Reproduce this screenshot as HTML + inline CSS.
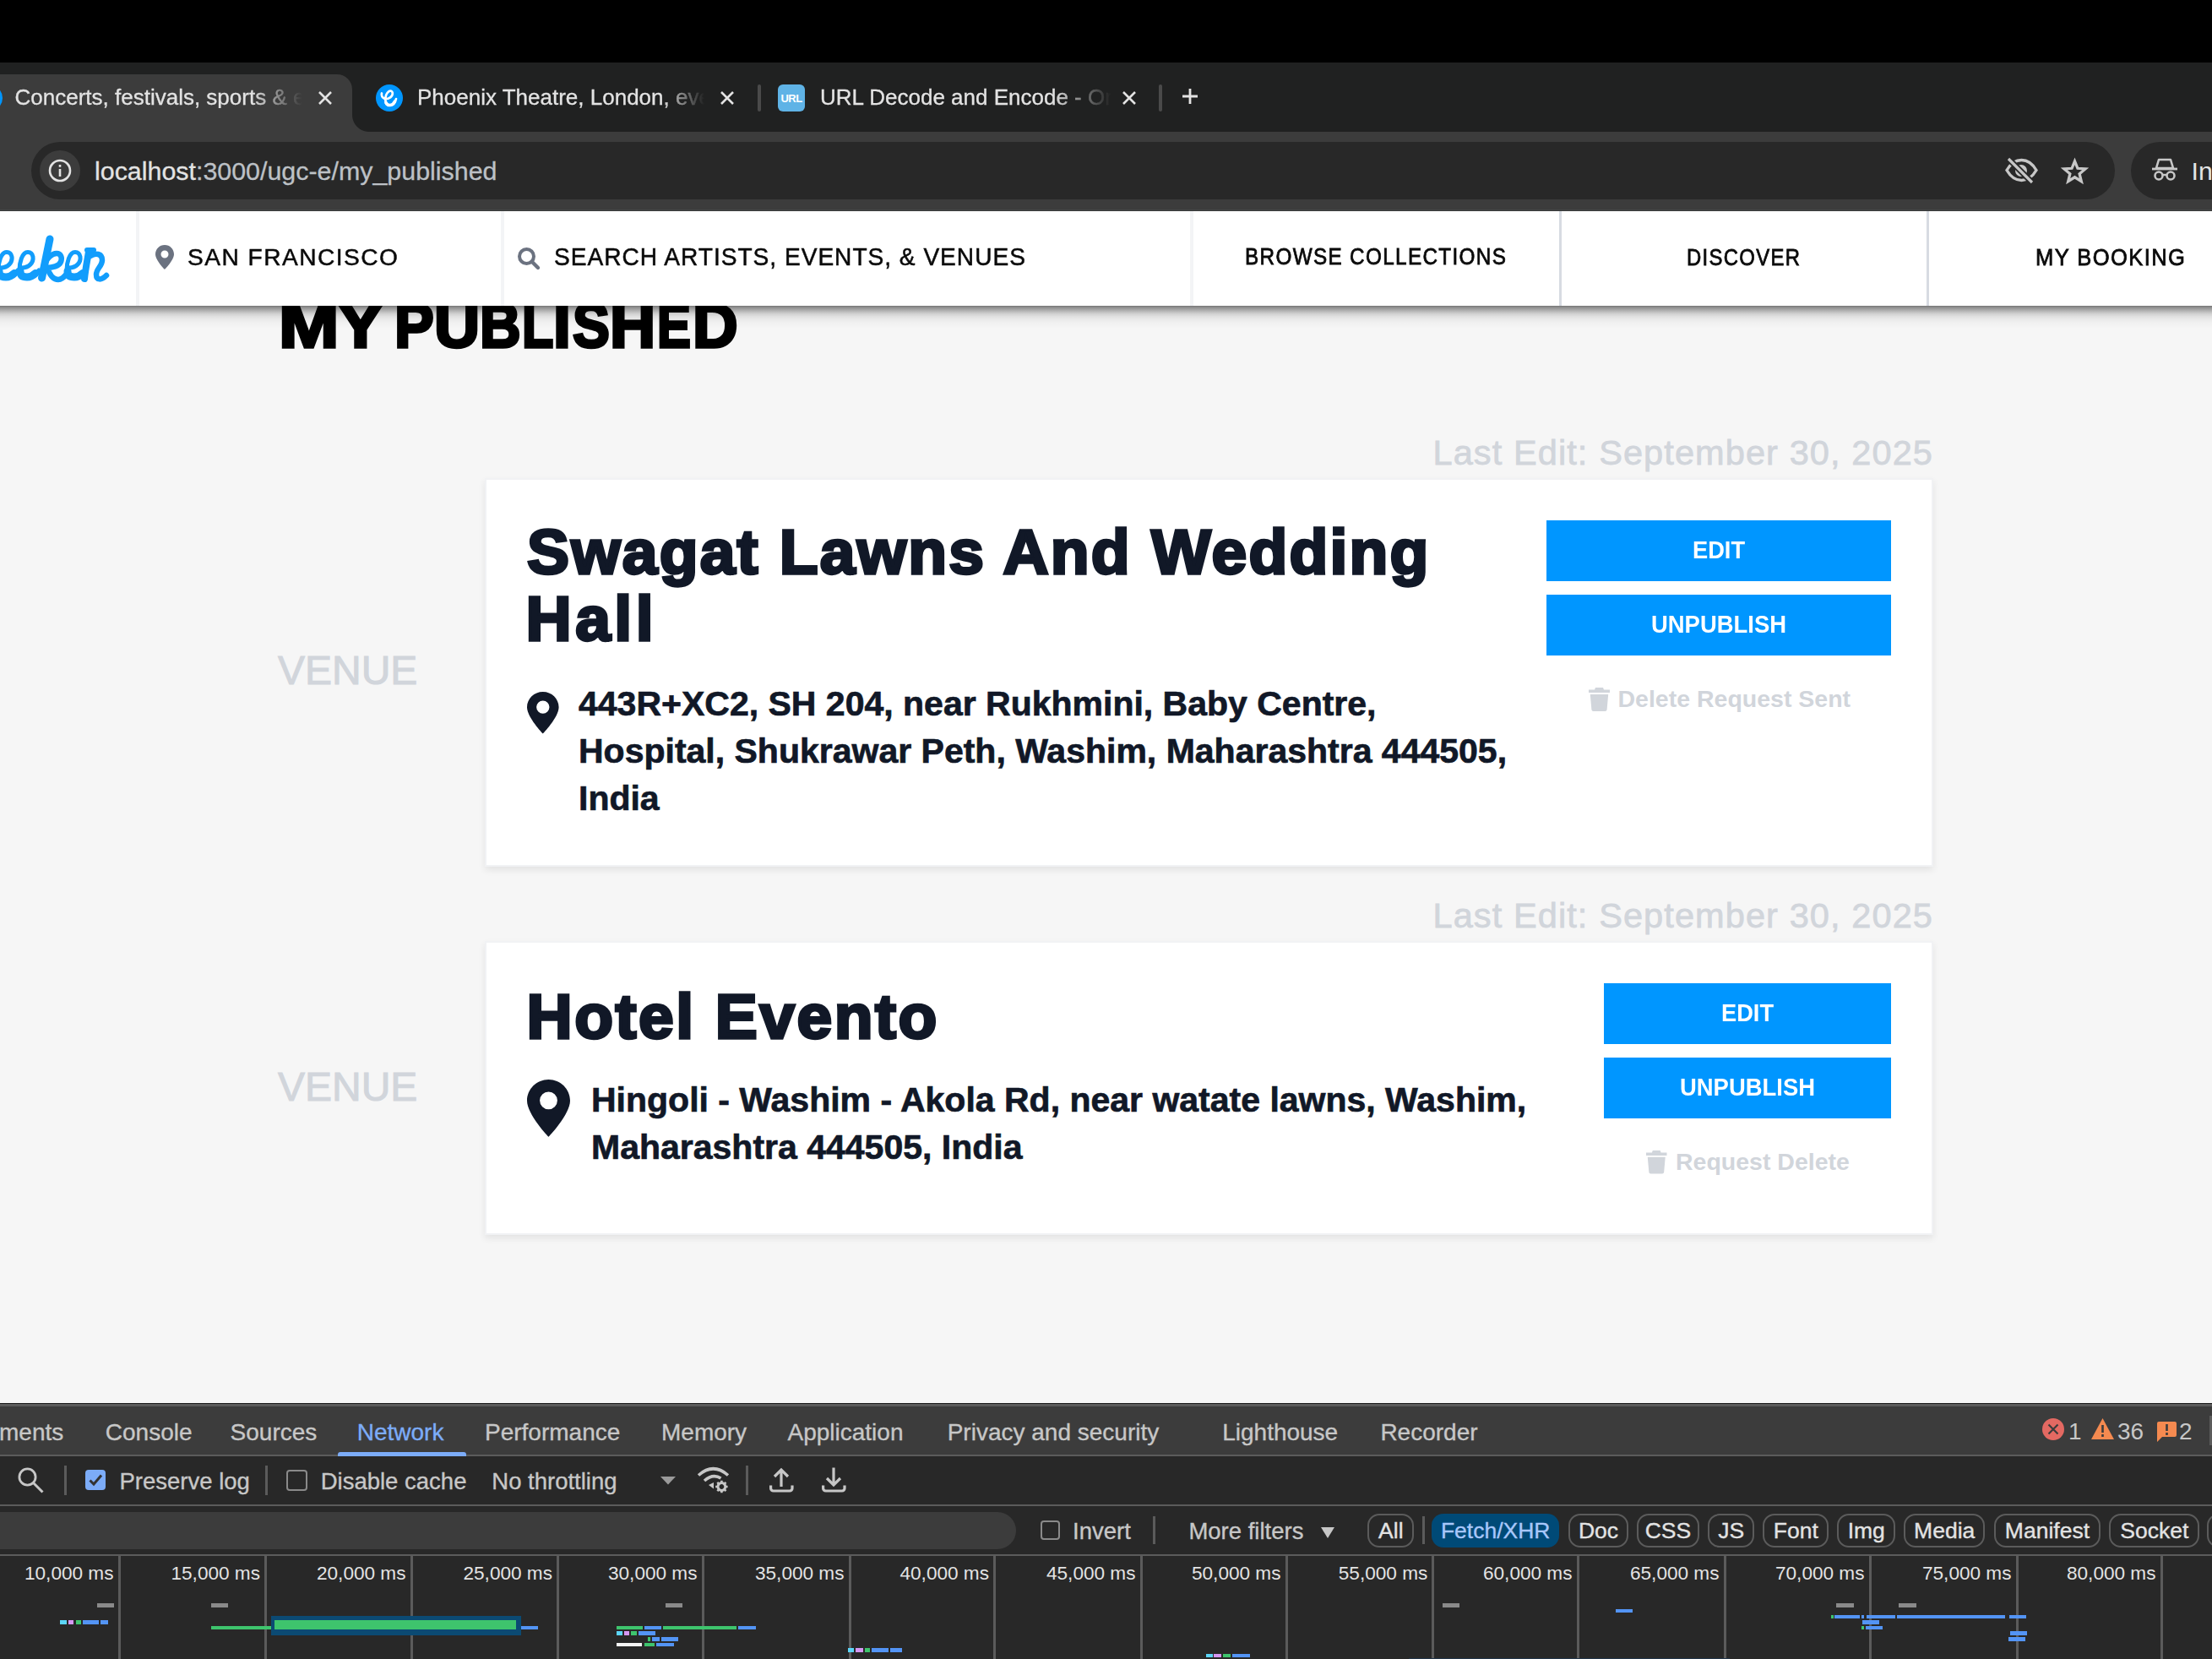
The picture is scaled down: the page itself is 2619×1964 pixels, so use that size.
<!DOCTYPE html>
<html><head><meta charset="utf-8"><title>My Published</title>
<style>
html,body{margin:0;padding:0;}
body{width:2619px;height:1964px;overflow:hidden;position:relative;background:#f6f6f6;font-family:"Liberation Sans",sans-serif;}
.t{position:absolute;white-space:nowrap;}
.r{position:absolute;}
svg{position:absolute;overflow:visible;}
</style></head><body>
<div class="r" style="left:0px;top:0px;width:2619px;height:74px;background:#000;"></div><div class="r" style="left:0px;top:74px;width:2619px;height:82px;background:#202121;"></div><div class="r" style="left:-20px;top:88px;width:437px;height:68px;background:#3c3c3c;border-top-right-radius:18px;"></div><div class="r" style="left:417px;top:136px;width:20px;height:20px;background:radial-gradient(circle at 100% 0, #202121 19.5px, #3c3c3c 20.5px);"></div><div class="r" style="left:-29px;top:100px;width:32px;height:32px;background:#0096ff;border-radius:50%;"></div><div class="t" style="top:102.40px;font-size:26px;line-height:26px;color:#e3e3e3;font-weight:400;left:17.50px;-webkit-text-stroke:0.3px #e3e3e3;width:340px;overflow:hidden;-webkit-mask-image:linear-gradient(90deg,#000 280px,transparent 340px);">Concerts, festivals, sports &amp; e</div><svg style="left:377.0px;top:108.0px" width="16" height="16"><path d="M1 1L15 15M15 1L1 15" stroke="#e3e3e3" stroke-width="2.6" stroke-linecap="butt"/></svg><svg style="left:440px;top:95px" width="42" height="42" viewBox="440 95 42 42"><circle cx="461" cy="116" r="16" fill="#0096ff"/><path d="M452,110.5 C451.2,113 452.5,115.5 456,117.3 C461,117.2 465.2,114 464.8,110 C464.4,107.6 462.2,107 460.5,108.2 C457.3,110.5 456,115 456.4,119.5 C456.8,123 459,124.8 462,124.6 C465.5,124.2 468,121.2 469,117" fill="none" stroke="#fff" stroke-width="2.7" stroke-linecap="round"/><path d="M457,121.5 C458,124 460,124.6 462,124.5 C464.5,124.2 466.5,122.5 467.5,120" fill="none" stroke="#fff" stroke-width="3.6" stroke-linecap="round"/></svg><div class="t" style="top:102.40px;font-size:26px;line-height:26px;color:#e3e3e3;font-weight:400;left:494.00px;-webkit-text-stroke:0.3px #e3e3e3;width:340px;overflow:hidden;-webkit-mask-image:linear-gradient(90deg,#000 290px,transparent 340px);">Phoenix Theatre, London, eve</div><svg style="left:853.0px;top:108.0px" width="16" height="16"><path d="M1 1L15 15M15 1L1 15" stroke="#e3e3e3" stroke-width="2.6" stroke-linecap="butt"/></svg><div class="r" style="left:897px;top:100px;width:4px;height:32px;background:#4a4a4a;border-radius:2px;"></div><div class="r" style="left:921px;top:100px;width:32px;height:32px;background:#5fb3e6;border-radius:6px;"></div><div class="t" style="top:110.45px;font-size:13px;line-height:13px;color:#fff;font-weight:700;left:921.00px;width:32px;text-align:center;letter-spacing:-0.5px;">URL</div><div class="t" style="top:102.40px;font-size:26px;line-height:26px;color:#e3e3e3;font-weight:400;left:971.00px;-webkit-text-stroke:0.3px #e3e3e3;width:340px;overflow:hidden;-webkit-mask-image:linear-gradient(90deg,#000 275px,transparent 345px);width:345px;">URL Decode and Encode - On</div><svg style="left:1328.5px;top:108.0px" width="16" height="16"><path d="M1 1L15 15M15 1L1 15" stroke="#e3e3e3" stroke-width="2.6" stroke-linecap="butt"/></svg><div class="r" style="left:1372px;top:100px;width:4px;height:32px;background:#4a4a4a;border-radius:2px;"></div><svg style="left:1399px;top:104px" width="20" height="20"><path d="M10 1V19M1 10H19" stroke="#e3e3e3" stroke-width="2.8"/></svg><div class="r" style="left:0px;top:156px;width:2619px;height:94px;background:#3c3c3c;"></div><div class="r" style="left:0px;top:248px;width:2619px;height:1px;background:#454747;"></div><div class="r" style="left:0px;top:249px;width:2619px;height:1px;background:#383a3a;"></div><div class="r" style="left:37px;top:168px;width:2467px;height:68px;background:#282828;border-radius:34px;"></div><div class="r" style="left:47px;top:178px;width:48px;height:48px;background:#3c3c3c;border-radius:50%;"></div><svg style="left:57px;top:188px" width="28" height="28"><circle cx="14" cy="14" r="12" fill="none" stroke="#e3e3e3" stroke-width="2.6"/><rect x="12.7" y="12" width="2.6" height="9" fill="#e3e3e3"/><rect x="12.7" y="7" width="2.6" height="2.8" fill="#e3e3e3"/></svg><div class="t" style="top:186.66px;font-size:30.4px;line-height:30.4px;color:#e3e3e3;font-weight:400;left:112.00px;-webkit-text-stroke:0.3px #e3e3e3;">localhost<span style="color:#bdc1c6;-webkit-text-stroke:0.3px #bdc1c6">:3000/ugc-e/my_published</span></div><svg style="left:2360px;top:175px" width="130" height="55" viewBox="2360 175 130 55"><path d="M2376 201.5C2381 193 2388 189.5 2393.5 189.5S2406 193 2411 201.5C2406 210 2399 213.5 2393.5 213.5S2381 210 2376 201.5Z" fill="none" stroke="#c7c7c7" stroke-width="3.4"/><circle cx="2393" cy="202" r="7" fill="#c7c7c7"/><path d="M2378 188L2406 216" stroke="#282828" stroke-width="7"/><path d="M2378 188L2406 216" stroke="#c7c7c7" stroke-width="3.2"/><path d="M2456.50 190.90L2459.94 199.30L2469.10 199.97L2462.13 205.85L2464.31 214.67L2456.50 209.80L2448.69 214.67L2450.87 205.85L2443.90 199.97L2453.06 199.30Z" fill="none" stroke="#c7c7c7" stroke-width="3.3" stroke-linejoin="miter"/></svg><div class="r" style="left:2523px;top:168px;width:200px;height:68px;background:#282828;border-radius:34px;"></div><svg style="left:2547px;top:187px" width="32" height="28" viewBox="0 0 32 28"><path d="M9 2H23L26 12H6Z" fill="none" stroke="#c7c7c7" stroke-width="2.6" stroke-linejoin="round"/><path d="M1 13H31" stroke="#c7c7c7" stroke-width="2.8"/><circle cx="9" cy="21" r="4.5" fill="none" stroke="#c7c7c7" stroke-width="2.6"/><circle cx="23" cy="21" r="4.5" fill="none" stroke="#c7c7c7" stroke-width="2.6"/><path d="M13.5 20H18.5" stroke="#c7c7c7" stroke-width="2.4"/></svg><div class="t" style="top:186.66px;font-size:30.4px;line-height:30.4px;color:#e3e3e3;font-weight:400;left:2594.60px;">Incognito</div><div class="r" style="left:0px;top:250px;width:2619px;height:112px;background:#fff;z-index:5;"></div><div class="r" style="left:0px;top:362px;width:2619px;height:28px;background:linear-gradient(180deg, rgba(0,0,0,0.52) 0px, rgba(0,0,0,0.42) 2px, rgba(0,0,0,0.31) 5px, rgba(0,0,0,0.2) 8px, rgba(0,0,0,0.14) 10px, rgba(0,0,0,0.085) 13px, rgba(0,0,0,0.05) 16px, rgba(0,0,0,0.024) 20px, rgba(0,0,0,0) 27px);z-index:5;"></div><div style="position:absolute;left:0;top:250px;width:2619px;height:112px;z-index:6"><div class="r" style="left:161px;top:0px;width:4px;height:112px;background:#f3f4f6;"></div><div class="r" style="left:593px;top:0px;width:4px;height:112px;background:#f3f4f6;"></div><div class="r" style="left:1409px;top:0px;width:4px;height:112px;background:#f3f4f6;"></div><div class="r" style="left:1846px;top:0px;width:3px;height:112px;background:#d7dbe2;"></div><div class="r" style="left:2281px;top:0px;width:3px;height:112px;background:#d7dbe2;"></div></div><div style="position:absolute;left:0;top:0;width:2619px;height:1964px;z-index:7;pointer-events:none"><svg style="left:0px;top:270px" width="140" height="70" viewBox="0 0 140 70"><path d="M1,47 C9,47 15,41 14,34 C13,29 10,28.5 8,28.5 C1,28.5 -2,41 -2,50 C-2,58 3,58.5 7,58.5 C12,58.5 17,55 21,50" fill="none" stroke="#129dfc" stroke-width="5" stroke-linecap="round"/><path d="M-1,51 C-1,57 3,58 7,58 C11,58 14,56.5 17,53.5" fill="none" stroke="#129dfc" stroke-width="9" stroke-linecap="round"/><path d="M26,47 C34,47 40,41 39,34 C38,29 35,28.5 33,28.5 C26,28.5 23,41 23,50 C23,58 28,58.5 32,58.5 C37,58.5 42,55 46,50" fill="none" stroke="#129dfc" stroke-width="5" stroke-linecap="round"/><path d="M24,51 C24,57 28,58 32,58 C36,58 39,56.5 42,53.5" fill="none" stroke="#129dfc" stroke-width="9" stroke-linecap="round"/><path d="M82,47 C90,47 96,41 95,34 C94,29 91,28.5 89,28.5 C82,28.5 79,41 79,50 C79,58 84,58.5 88,58.5 C93,58.5 98,55 102,50" fill="none" stroke="#129dfc" stroke-width="5" stroke-linecap="round"/><path d="M80,51 C80,57 84,58 88,58 C92,58 95,56.5 98,53.5" fill="none" stroke="#129dfc" stroke-width="9" stroke-linecap="round"/><path d="M59,13 L49.5,59" fill="none" stroke="#129dfc" stroke-width="9" stroke-linecap="round"/><path d="M51,47 C55,35 62,30 67,30 C72,30 74,35 72,40 C70,45 62,47 55,47 M56,47 C59,56 63,61 69,61 C73,61 76,58 79,54" fill="none" stroke="#129dfc" stroke-width="6.5" stroke-linecap="round"/><path d="M105,28 C103,40 101,50 100,60" fill="none" stroke="#129dfc" stroke-width="8" stroke-linecap="round"/><path d="M103,26 L111,26" fill="none" stroke="#129dfc" stroke-width="6" stroke-linecap="round"/><path d="M107,33 C113,29 121,30 121,38 C121,45 114,48 114,55 C114,62 120,62 126,56" fill="none" stroke="#129dfc" stroke-width="6.5" stroke-linecap="round"/></svg><svg style="left:184px;top:290px" width="22" height="29" viewBox="0 0 22 29"><path d="M11 0C4.9 0 0 4.9 0 11C0 18 11 29 11 29S22 18 22 11C22 4.9 17.1 0 11 0Z M11 6.5A4.5 4.5 0 1 1 11 15.5A4.5 4.5 0 1 1 11 6.5Z" fill="#6b7280" fill-rule="evenodd"/></svg><div class="t" style="top:290.46px;font-size:28.4px;line-height:28.4px;color:#0a0a0a;font-weight:400;letter-spacing:1.5px;left:221.80px;transform:scaleX(0.99);transform-origin:0 50%;-webkit-text-stroke:0.5px #0a0a0a;">SAN FRANCISCO</div><svg style="left:612px;top:292px" width="28" height="28" viewBox="0 0 28 28"><circle cx="11.5" cy="11.5" r="8.5" fill="none" stroke="#6b7280" stroke-width="4"/><path d="M18 18L25 25" stroke="#6b7280" stroke-width="4.4" stroke-linecap="round"/></svg><div class="t" style="top:290.45px;font-size:29px;line-height:29px;color:#0a0a0a;font-weight:400;letter-spacing:1.0px;left:656.30px;transform:scaleX(0.97);transform-origin:0 50%;-webkit-text-stroke:0.5px #0a0a0a;">SEARCH ARTISTS, EVENTS, &amp; VENUES</div><div class="t" style="top:291.45px;font-size:27px;line-height:27px;color:#0a0a0a;font-weight:400;letter-spacing:1.5px;left:1474.00px;transform:scaleX(0.899);transform-origin:0 50%;-webkit-text-stroke:0.8px #0a0a0a;">BROWSE COLLECTIONS</div><div class="t" style="top:291.65px;font-size:27px;line-height:27px;color:#0a0a0a;font-weight:400;letter-spacing:1.5px;left:1996.70px;transform:scaleX(0.884);transform-origin:0 50%;-webkit-text-stroke:0.8px #0a0a0a;">DISCOVER</div><div class="t" style="top:291.65px;font-size:27px;line-height:27px;color:#0a0a0a;font-weight:400;letter-spacing:1.5px;left:2410.00px;transform:scaleX(0.946);transform-origin:0 50%;-webkit-text-stroke:0.8px #0a0a0a;">MY BOOKING</div></div><div class="t" style="left:329.77px;top:348px;font-size:75px;line-height:75px;font-weight:700;color:#000;-webkit-text-stroke:3.4px #000;transform:scaleX(1.1429);transform-origin:0 0;z-index:1">M</div><div class="t" style="left:399.57px;top:348px;font-size:75px;line-height:75px;font-weight:700;color:#000;-webkit-text-stroke:3.4px #000;transform:scaleX(1.0712);transform-origin:0 0;z-index:1">Y</div><div class="t" style="left:467.10px;top:348px;font-size:75px;line-height:75px;font-weight:700;color:#000;-webkit-text-stroke:3.4px #000;transform:scaleX(0.9348);transform-origin:0 0;z-index:1">P</div><div class="t" style="left:514.00px;top:348px;font-size:75px;line-height:75px;font-weight:700;color:#000;-webkit-text-stroke:3.4px #000;transform:scaleX(1.0000);transform-origin:0 0;z-index:1">U</div><div class="t" style="left:568.31px;top:348px;font-size:75px;line-height:75px;font-weight:700;color:#000;-webkit-text-stroke:3.4px #000;transform:scaleX(0.8980);transform-origin:0 0;z-index:1">B</div><div class="t" style="left:617.56px;top:348px;font-size:75px;line-height:75px;font-weight:700;color:#000;-webkit-text-stroke:3.4px #000;transform:scaleX(0.8143);transform-origin:0 0;z-index:1">L</div><div class="t" style="left:655.00px;top:348px;font-size:75px;line-height:75px;font-weight:700;color:#000;-webkit-text-stroke:3.4px #000;transform:scaleX(1.0000);transform-origin:0 0;z-index:1">I</div><div class="t" style="left:678.00px;top:348px;font-size:75px;line-height:75px;font-weight:700;color:#000;-webkit-text-stroke:3.4px #000;transform:scaleX(0.8776);transform-origin:0 0;z-index:1">S</div><div class="t" style="left:722.00px;top:348px;font-size:75px;line-height:75px;font-weight:700;color:#000;-webkit-text-stroke:3.4px #000;transform:scaleX(1.0000);transform-origin:0 0;z-index:1">H</div><div class="t" style="left:778.41px;top:348px;font-size:75px;line-height:75px;font-weight:700;color:#000;-webkit-text-stroke:3.4px #000;transform:scaleX(0.7978);transform-origin:0 0;z-index:1">E</div><div class="t" style="left:819.53px;top:348px;font-size:75px;line-height:75px;font-weight:700;color:#000;-webkit-text-stroke:3.4px #000;transform:scaleX(0.9900);transform-origin:0 0;z-index:1">D</div><div class="t" style="top:515.23px;font-size:41.5px;line-height:41.5px;color:#d1d5db;font-weight:400;letter-spacing:1.1px;right:330.00px;-webkit-text-stroke:0.8px #d1d5db;">Last Edit: September 30, 2025</div><div class="r" style="left:574px;top:566px;width:1711px;height:456px;background:#fff;border:2px solid #f1f2f4;box-shadow:0 4px 8px rgba(0,0,0,0.08);"></div><div class="t" style="top:770.20px;font-size:48px;line-height:48px;color:#d1d5db;font-weight:400;left:329.00px;-webkit-text-stroke:1px #d1d5db;">VENUE</div><div class="t" style="top:616.25px;font-size:75px;line-height:75px;color:#111827;font-weight:700;letter-spacing:2.2px;left:624.00px;-webkit-text-stroke:3.4px #111827;">Swagat Lawns And Wedding</div><div class="t" style="top:695.25px;font-size:75px;line-height:75px;color:#111827;font-weight:700;letter-spacing:4.5px;left:622.50px;-webkit-text-stroke:3.4px #111827;">Hall</div><svg style="left:623.7px;top:819px" width="37.6" height="49.5" viewBox="0 0 24 32" preserveAspectRatio="none"><path d="M12 0C5.4 0 0 5.3 0 11.8C0 19.5 12 32 12 32S24 19.5 24 11.8C24 5.3 18.6 0 12 0Z M12 6.8A4.9 4.9 0 1 1 12 16.6A4.9 4.9 0 1 1 12 6.8Z" fill="#111827" fill-rule="evenodd"/></svg><div class="t" style="top:813.15px;font-size:41px;line-height:41px;color:#111827;font-weight:700;left:685.00px;-webkit-text-stroke:0.7px #111827;">443R+XC2, SH 204, near Rukhmini, Baby Centre,</div><div class="t" style="top:869.15px;font-size:41px;line-height:41px;color:#111827;font-weight:700;left:685.00px;-webkit-text-stroke:0.7px #111827;">Hospital, Shukrawar Peth, Washim, Maharashtra 444505,</div><div class="t" style="top:925.15px;font-size:41px;line-height:41px;color:#111827;font-weight:700;left:685.00px;-webkit-text-stroke:0.7px #111827;">India</div><div class="r" style="left:1831px;top:616px;width:408px;height:72px;background:#0096ff;"></div><div class="t" style="top:636.20px;font-size:30px;line-height:30px;color:#fff;font-weight:700;left:1831.00px;width:408px;text-align:center;transform:scaleX(0.9077598828696926);transform-origin:50% 50%;">EDIT</div><div class="r" style="left:1831px;top:704px;width:408px;height:72px;background:#0096ff;"></div><div class="t" style="top:724.30px;font-size:30px;line-height:30px;color:#fff;font-weight:700;left:1831.00px;width:408px;text-align:center;transform:scaleX(0.9142857142857143);transform-origin:50% 50%;">UNPUBLISH</div><svg style="left:1880.6px;top:814px" width="25" height="28" viewBox="0 0 25 28" preserveAspectRatio="none"><path d="M8 0H17L18 2.5H25V6H0V2.5H7Z" fill="#d1d5db"/><path d="M1.8 8H23.2L21.6 26C21.5 27.2 20.6 28 19.4 28H5.6C4.4 28 3.5 27.2 3.4 26Z" fill="#d1d5db"/></svg><div class="t" style="top:812.57px;font-size:28.5px;line-height:28.5px;color:#d1d5db;font-weight:700;left:1915.50px;">Delete Request Sent</div><div class="t" style="top:1063.02px;font-size:41.5px;line-height:41.5px;color:#d1d5db;font-weight:400;letter-spacing:1.1px;right:330.00px;-webkit-text-stroke:0.8px #d1d5db;">Last Edit: September 30, 2025</div><div class="r" style="left:574px;top:1114px;width:1711px;height:344px;background:#fff;border:2px solid #f1f2f4;box-shadow:0 4px 8px rgba(0,0,0,0.08);"></div><div class="t" style="top:1263.20px;font-size:48px;line-height:48px;color:#d1d5db;font-weight:400;left:329.00px;-webkit-text-stroke:1px #d1d5db;">VENUE</div><div class="t" style="top:1166.25px;font-size:75px;line-height:75px;color:#111827;font-weight:700;letter-spacing:2.5px;left:623.50px;-webkit-text-stroke:3.4px #111827;">Hotel Evento</div><svg style="left:624px;top:1278px" width="51" height="68" viewBox="0 0 24 32" preserveAspectRatio="none"><path d="M12 0C5.4 0 0 5.3 0 11.8C0 19.5 12 32 12 32S24 19.5 24 11.8C24 5.3 18.6 0 12 0Z M12 6.8A4.9 4.9 0 1 1 12 16.6A4.9 4.9 0 1 1 12 6.8Z" fill="#111827" fill-rule="evenodd"/></svg><div class="t" style="top:1282.15px;font-size:41px;line-height:41px;color:#111827;font-weight:700;left:700.00px;-webkit-text-stroke:0.7px #111827;">Hingoli - Washim - Akola Rd, near watate lawns, Washim,</div><div class="t" style="top:1338.15px;font-size:41px;line-height:41px;color:#111827;font-weight:700;left:700.00px;-webkit-text-stroke:0.7px #111827;">Maharashtra 444505, India</div><div class="r" style="left:1899px;top:1164px;width:340px;height:72px;background:#0096ff;"></div><div class="t" style="top:1184.20px;font-size:30px;line-height:30px;color:#fff;font-weight:700;left:1899.00px;width:340px;text-align:center;transform:scaleX(0.9077598828696926);transform-origin:50% 50%;">EDIT</div><div class="r" style="left:1899px;top:1252px;width:340px;height:72px;background:#0096ff;"></div><div class="t" style="top:1272.20px;font-size:30px;line-height:30px;color:#fff;font-weight:700;left:1899.00px;width:340px;text-align:center;transform:scaleX(0.9142857142857143);transform-origin:50% 50%;">UNPUBLISH</div><svg style="left:1948.8px;top:1362px" width="24.5" height="27.5" viewBox="0 0 25 28" preserveAspectRatio="none"><path d="M8 0H17L18 2.5H25V6H0V2.5H7Z" fill="#d1d5db"/><path d="M1.8 8H23.2L21.6 26C21.5 27.2 20.6 28 19.4 28H5.6C4.4 28 3.5 27.2 3.4 26Z" fill="#d1d5db"/></svg><div class="t" style="top:1361.18px;font-size:28.5px;line-height:28.5px;color:#d1d5db;font-weight:700;left:1984.00px;">Request Delete</div><div class="r" style="left:0px;top:1661px;width:2619px;height:303px;background:#282828;z-index:10;"></div><div style="position:absolute;left:0;top:0;width:2619px;height:1964px;z-index:11"><div class="r" style="left:0px;top:1661px;width:2619px;height:1px;background:#1a1a1a;"></div><div class="r" style="left:0px;top:1662px;width:2619px;height:3px;background:#5b5b5b;"></div><div class="r" style="left:0px;top:1665px;width:2619px;height:57px;background:#3c3c3c;"></div><div class="r" style="left:0px;top:1722px;width:2619px;height:2px;background:#5b5b5b;"></div><div class="t" style="top:1681.70px;font-size:28px;line-height:28px;color:#c7c7c7;font-weight:400;left:-1.00px;-webkit-text-stroke:0.35px #c7c7c7;">ments</div><div class="t" style="top:1681.70px;font-size:28px;line-height:28px;color:#c7c7c7;font-weight:400;left:124.80px;-webkit-text-stroke:0.35px #c7c7c7;">Console</div><div class="t" style="top:1681.70px;font-size:28px;line-height:28px;color:#c7c7c7;font-weight:400;left:272.60px;-webkit-text-stroke:0.35px #c7c7c7;">Sources</div><div class="t" style="top:1681.70px;font-size:28px;line-height:28px;color:#7cacf8;font-weight:400;left:422.70px;-webkit-text-stroke:0.35px #7cacf8;">Network</div><div class="t" style="top:1681.70px;font-size:28px;line-height:28px;color:#c7c7c7;font-weight:400;left:574.00px;-webkit-text-stroke:0.35px #c7c7c7;">Performance</div><div class="t" style="top:1681.70px;font-size:28px;line-height:28px;color:#c7c7c7;font-weight:400;left:783.00px;-webkit-text-stroke:0.35px #c7c7c7;">Memory</div><div class="t" style="top:1681.70px;font-size:28px;line-height:28px;color:#c7c7c7;font-weight:400;left:932.50px;-webkit-text-stroke:0.35px #c7c7c7;">Application</div><div class="t" style="top:1681.70px;font-size:28px;line-height:28px;color:#c7c7c7;font-weight:400;left:1121.70px;-webkit-text-stroke:0.35px #c7c7c7;">Privacy and security</div><div class="t" style="top:1681.70px;font-size:28px;line-height:28px;color:#c7c7c7;font-weight:400;left:1447.20px;-webkit-text-stroke:0.35px #c7c7c7;">Lighthouse</div><div class="t" style="top:1681.70px;font-size:28px;line-height:28px;color:#c7c7c7;font-weight:400;left:1634.40px;-webkit-text-stroke:0.35px #c7c7c7;">Recorder</div><div class="r" style="left:400px;top:1719px;width:152px;height:5px;background:#7cacf8;border-radius:3px 3px 0 0;"></div><svg style="left:2418px;top:1679px" width="26" height="26" viewBox="0 0 26 26"><circle cx="13" cy="13" r="13" fill="#e46962"/><path d="M7.5 7.5L18.5 18.5M18.5 7.5L7.5 18.5" stroke="#3c3c3c" stroke-width="2.2"/></svg><div class="t" style="top:1681.20px;font-size:28px;line-height:28px;color:#c7c7c7;font-weight:400;left:2449.00px;">1</div><svg style="left:2476px;top:1679px" width="27" height="25" viewBox="0 0 27 25"><path d="M13.5 0L27 25H0Z" fill="#f58a50"/><rect x="12.2" y="8" width="2.6" height="9" fill="#3c3c3c"/><rect x="12.2" y="19" width="2.6" height="3" fill="#3c3c3c"/></svg><div class="t" style="top:1681.20px;font-size:28px;line-height:28px;color:#c7c7c7;font-weight:400;left:2507.00px;">36</div><svg style="left:2554px;top:1683px" width="23" height="24" viewBox="0 0 23 24"><path d="M0 2Q0 0 2 0H21Q23 0 23 2V16Q23 18 21 18H6L0 24Z" fill="#f58a50"/><rect x="10.2" y="3" width="2.6" height="8" fill="#3c3c3c"/><rect x="10.2" y="13" width="2.6" height="3" fill="#3c3c3c"/></svg><div class="t" style="top:1681.20px;font-size:28px;line-height:28px;color:#c7c7c7;font-weight:400;left:2580.00px;">2</div><div class="r" style="left:2616px;top:1676px;width:4px;height:35px;background:#5b5b5b;"></div><div class="r" style="left:0px;top:1781px;width:2619px;height:2px;background:#5b5b5b;"></div><svg style="left:21px;top:1737px" width="32" height="32" viewBox="0 0 32 32"><circle cx="11.5" cy="11.5" r="9.6" fill="none" stroke="#c7c7c7" stroke-width="2.8"/><path d="M18.5 18.5L29.5 29.5" stroke="#c7c7c7" stroke-width="3"/></svg><div class="r" style="left:76px;top:1735px;width:3px;height:35px;background:#5b5b5b;"></div><div class="r" style="left:101px;top:1740px;width:24px;height:24px;background:#7cacf8;border-radius:4px;"></div><svg style="left:101px;top:1740px" width="24" height="24" viewBox="0 0 24 24"><path d="M5.5 12.5L10 17L19 6.5" fill="none" stroke="#333" stroke-width="3"/></svg><div class="t" style="top:1739.62px;font-size:27.5px;line-height:27.5px;color:#c7c7c7;font-weight:400;left:141.50px;-webkit-text-stroke:0.35px #c7c7c7;">Preserve log</div><div class="r" style="left:314px;top:1735px;width:3px;height:35px;background:#5b5b5b;"></div><div class="r" style="left:339px;top:1740px;width:25px;height:25px;background:transparent;border:2.5px solid #8a8a8a;border-radius:4px;box-sizing:border-box;"></div><div class="t" style="top:1739.62px;font-size:27.5px;line-height:27.5px;color:#c7c7c7;font-weight:400;left:379.70px;-webkit-text-stroke:0.35px #c7c7c7;">Disable cache</div><div class="t" style="top:1739.62px;font-size:27.5px;line-height:27.5px;color:#c7c7c7;font-weight:400;left:582.30px;-webkit-text-stroke:0.35px #c7c7c7;">No throttling</div><svg style="left:782px;top:1748px" width="18" height="10" viewBox="0 0 18 10"><path d="M0 0H18L9 9.5Z" fill="#9a9a9a"/></svg><svg style="left:820px;top:1733px" width="50" height="36" viewBox="820 1733 50 36"><path d="M827 1746.5Q844.5 1731 862 1746.5" fill="none" stroke="#c7c7c7" stroke-width="3.6"/><path d="M834 1753Q844 1744 853.5 1750" fill="none" stroke="#c7c7c7" stroke-width="3.6"/><path d="M839 1758L845 1755V1762.5Z" fill="#c7c7c7"/><g transform="translate(854.4 1760)"><circle r="4.4" fill="none" stroke="#c7c7c7" stroke-width="3"/><path d="M4.20 0.00L7.20 0.00M2.97 2.97L5.09 5.09M0.00 4.20L0.00 7.20M-2.97 2.97L-5.09 5.09M-4.20 0.00L-7.20 0.00M-2.97 -2.97L-5.09 -5.09M-0.00 -4.20L-0.00 -7.20M2.97 -2.97L5.09 -5.09" stroke="#c7c7c7" stroke-width="2.6"/></g></svg><div class="r" style="left:883px;top:1735px;width:3px;height:35px;background:#5b5b5b;"></div><svg style="left:905px;top:1733px" width="40" height="36" viewBox="905 1733 40 36"><path d="M925 1760V1740M917 1748L925 1740L933 1748" fill="none" stroke="#c7c7c7" stroke-width="3.2"/><path d="M912.6 1758.5V1762A3 3 0 0 0 915.6 1765H935A3 3 0 0 0 938 1762V1758.5" fill="none" stroke="#c7c7c7" stroke-width="3.2"/></svg><svg style="left:967px;top:1733px" width="40" height="36" viewBox="967 1733 40 36"><path d="M987 1737.5V1757M979 1750L987 1758L995 1750" fill="none" stroke="#c7c7c7" stroke-width="3.2"/><path d="M974.6 1758.5V1762A3 3 0 0 0 977.6 1765H997A3 3 0 0 0 1000 1762V1758.5" fill="none" stroke="#c7c7c7" stroke-width="3.2"/></svg><div class="r" style="left:-30px;top:1790px;width:1233px;height:44px;background:#3c3c3c;border-radius:22px;"></div><div class="r" style="left:1232px;top:1800px;width:23px;height:23px;background:transparent;border:2.5px solid #8a8a8a;border-radius:4px;box-sizing:border-box;"></div><div class="t" style="top:1798.62px;font-size:27.5px;line-height:27.5px;color:#c7c7c7;font-weight:400;left:1270.00px;-webkit-text-stroke:0.35px #c7c7c7;">Invert</div><div class="r" style="left:1365px;top:1795px;width:3px;height:33px;background:#5b5b5b;"></div><div class="t" style="top:1798.62px;font-size:27.5px;line-height:27.5px;color:#c7c7c7;font-weight:400;left:1407.40px;-webkit-text-stroke:0.35px #c7c7c7;">More filters</div><svg style="left:1564px;top:1808px" width="16" height="13" viewBox="0 0 16 13"><path d="M0 0H16L8 13Z" fill="#c7c7c7"/></svg><div class="r" style="left:1619.3px;top:1791.5px;width:55.0px;height:40.5px;background:transparent;border:2px solid #5b5b5b;border-radius:14px;box-sizing:border-box;"></div><div class="t" style="top:1799.47px;font-size:26.5px;line-height:26.5px;color:#e3e3e3;font-weight:400;left:1619.30px;width:55.0px;text-align:center;-webkit-text-stroke:0.35px #e3e3e3;">All</div><div class="r" style="left:1684px;top:1795px;width:3px;height:33px;background:#5b5b5b;"></div><div class="r" style="left:1695.4px;top:1791.5px;width:150.5999999999999px;height:40.5px;background:#004a77;border-radius:14px;"></div><div class="t" style="top:1799.47px;font-size:26.5px;line-height:26.5px;color:#a8c7fa;font-weight:400;left:1695.40px;width:150.5999999999999px;text-align:center;-webkit-text-stroke:0.35px #a8c7fa;">Fetch/XHR</div><div class="r" style="left:1856.6px;top:1791.5px;width:71.90000000000009px;height:40.5px;background:transparent;border:2px solid #5b5b5b;border-radius:14px;box-sizing:border-box;"></div><div class="t" style="top:1799.47px;font-size:26.5px;line-height:26.5px;color:#e3e3e3;font-weight:400;left:1856.60px;width:71.90000000000009px;text-align:center;-webkit-text-stroke:0.35px #e3e3e3;">Doc</div><div class="r" style="left:1937.6px;top:1791.5px;width:74.80000000000018px;height:40.5px;background:transparent;border:2px solid #5b5b5b;border-radius:14px;box-sizing:border-box;"></div><div class="t" style="top:1799.47px;font-size:26.5px;line-height:26.5px;color:#e3e3e3;font-weight:400;left:1937.60px;width:74.80000000000018px;text-align:center;-webkit-text-stroke:0.35px #e3e3e3;">CSS</div><div class="r" style="left:2022.4px;top:1791.5px;width:54.79999999999973px;height:40.5px;background:transparent;border:2px solid #5b5b5b;border-radius:14px;box-sizing:border-box;"></div><div class="t" style="top:1799.47px;font-size:26.5px;line-height:26.5px;color:#e3e3e3;font-weight:400;left:2022.40px;width:54.79999999999973px;text-align:center;-webkit-text-stroke:0.35px #e3e3e3;">JS</div><div class="r" style="left:2087.2px;top:1791.5px;width:78.10000000000036px;height:40.5px;background:transparent;border:2px solid #5b5b5b;border-radius:14px;box-sizing:border-box;"></div><div class="t" style="top:1799.47px;font-size:26.5px;line-height:26.5px;color:#e3e3e3;font-weight:400;left:2087.20px;width:78.10000000000036px;text-align:center;-webkit-text-stroke:0.35px #e3e3e3;">Font</div><div class="r" style="left:2175.3px;top:1791.5px;width:68.89999999999964px;height:40.5px;background:transparent;border:2px solid #5b5b5b;border-radius:14px;box-sizing:border-box;"></div><div class="t" style="top:1799.47px;font-size:26.5px;line-height:26.5px;color:#e3e3e3;font-weight:400;left:2175.30px;width:68.89999999999964px;text-align:center;-webkit-text-stroke:0.35px #e3e3e3;">Img</div><div class="r" style="left:2254.2px;top:1791.5px;width:96.0px;height:40.5px;background:transparent;border:2px solid #5b5b5b;border-radius:14px;box-sizing:border-box;"></div><div class="t" style="top:1799.47px;font-size:26.5px;line-height:26.5px;color:#e3e3e3;font-weight:400;left:2254.20px;width:96.0px;text-align:center;-webkit-text-stroke:0.35px #e3e3e3;">Media</div><div class="r" style="left:2360.6px;top:1791.5px;width:126.70000000000027px;height:40.5px;background:transparent;border:2px solid #5b5b5b;border-radius:14px;box-sizing:border-box;"></div><div class="t" style="top:1799.47px;font-size:26.5px;line-height:26.5px;color:#e3e3e3;font-weight:400;left:2360.60px;width:126.70000000000027px;text-align:center;-webkit-text-stroke:0.35px #e3e3e3;">Manifest</div><div class="r" style="left:2497.3px;top:1791.5px;width:107.09999999999991px;height:40.5px;background:transparent;border:2px solid #5b5b5b;border-radius:14px;box-sizing:border-box;"></div><div class="t" style="top:1799.47px;font-size:26.5px;line-height:26.5px;color:#e3e3e3;font-weight:400;left:2497.30px;width:107.09999999999991px;text-align:center;-webkit-text-stroke:0.35px #e3e3e3;">Socket</div><div class="r" style="left:2613px;top:1791.5px;width:40px;height:40.5px;background:transparent;border:2px solid #5b5b5b;border-radius:14px;box-sizing:border-box;"></div><div class="r" style="left:0px;top:1840px;width:2619px;height:2px;background:#5b5b5b;"></div><div class="r" style="left:139.5px;top:1842px;width:3px;height:122px;background:#5b5b5b;"></div><div class="t" style="top:1851.79px;font-size:22.6px;line-height:22.6px;color:#e3e3e3;font-weight:400;right:2484.50px;">10,000 ms</div><div class="r" style="left:313.0px;top:1842px;width:3px;height:122px;background:#5b5b5b;"></div><div class="t" style="top:1851.79px;font-size:22.6px;line-height:22.6px;color:#e3e3e3;font-weight:400;right:2311.00px;">15,000 ms</div><div class="r" style="left:485.5px;top:1842px;width:3px;height:122px;background:#5b5b5b;"></div><div class="t" style="top:1851.79px;font-size:22.6px;line-height:22.6px;color:#e3e3e3;font-weight:400;right:2138.50px;">20,000 ms</div><div class="r" style="left:659.0px;top:1842px;width:3px;height:122px;background:#5b5b5b;"></div><div class="t" style="top:1851.79px;font-size:22.6px;line-height:22.6px;color:#e3e3e3;font-weight:400;right:1965.00px;">25,000 ms</div><div class="r" style="left:830.5px;top:1842px;width:3px;height:122px;background:#5b5b5b;"></div><div class="t" style="top:1851.79px;font-size:22.6px;line-height:22.6px;color:#e3e3e3;font-weight:400;right:1793.50px;">30,000 ms</div><div class="r" style="left:1004.5px;top:1842px;width:3px;height:122px;background:#5b5b5b;"></div><div class="t" style="top:1851.79px;font-size:22.6px;line-height:22.6px;color:#e3e3e3;font-weight:400;right:1619.50px;">35,000 ms</div><div class="r" style="left:1176.0px;top:1842px;width:3px;height:122px;background:#5b5b5b;"></div><div class="t" style="top:1851.79px;font-size:22.6px;line-height:22.6px;color:#e3e3e3;font-weight:400;right:1448.00px;">40,000 ms</div><div class="r" style="left:1349.5px;top:1842px;width:3px;height:122px;background:#5b5b5b;"></div><div class="t" style="top:1851.79px;font-size:22.6px;line-height:22.6px;color:#e3e3e3;font-weight:400;right:1274.50px;">45,000 ms</div><div class="r" style="left:1521.5px;top:1842px;width:3px;height:122px;background:#5b5b5b;"></div><div class="t" style="top:1851.79px;font-size:22.6px;line-height:22.6px;color:#e3e3e3;font-weight:400;right:1102.50px;">50,000 ms</div><div class="r" style="left:1695.3px;top:1842px;width:3px;height:122px;background:#5b5b5b;"></div><div class="t" style="top:1851.79px;font-size:22.6px;line-height:22.6px;color:#e3e3e3;font-weight:400;right:928.70px;">55,000 ms</div><div class="r" style="left:1866.5px;top:1842px;width:3px;height:122px;background:#5b5b5b;"></div><div class="t" style="top:1851.79px;font-size:22.6px;line-height:22.6px;color:#e3e3e3;font-weight:400;right:757.50px;">60,000 ms</div><div class="r" style="left:2040.5px;top:1842px;width:3px;height:122px;background:#5b5b5b;"></div><div class="t" style="top:1851.79px;font-size:22.6px;line-height:22.6px;color:#e3e3e3;font-weight:400;right:583.50px;">65,000 ms</div><div class="r" style="left:2212.5px;top:1842px;width:3px;height:122px;background:#5b5b5b;"></div><div class="t" style="top:1851.79px;font-size:22.6px;line-height:22.6px;color:#e3e3e3;font-weight:400;right:411.50px;">70,000 ms</div><div class="r" style="left:2386.5px;top:1842px;width:3px;height:122px;background:#5b5b5b;"></div><div class="t" style="top:1851.79px;font-size:22.6px;line-height:22.6px;color:#e3e3e3;font-weight:400;right:237.50px;">75,000 ms</div><div class="r" style="left:2557.5px;top:1842px;width:3px;height:122px;background:#5b5b5b;"></div><div class="t" style="top:1851.79px;font-size:22.6px;line-height:22.6px;color:#e3e3e3;font-weight:400;right:66.50px;">80,000 ms</div><div class="r" style="left:114.9px;top:1898px;width:20.3px;height:4.5px;background:#8a8a8a;"></div><div class="r" style="left:249.7px;top:1898px;width:20.3px;height:4.5px;background:#8a8a8a;"></div><div class="r" style="left:787.7px;top:1898px;width:20.6px;height:4.5px;background:#8a8a8a;"></div><div class="r" style="left:1708px;top:1898px;width:20px;height:4.5px;background:#8a8a8a;"></div><div class="r" style="left:2174px;top:1898px;width:20.5px;height:4.5px;background:#8a8a8a;"></div><div class="r" style="left:2248.4px;top:1898px;width:20.6px;height:4.5px;background:#8a8a8a;"></div><div class="r" style="left:70.7px;top:1918px;width:8.3px;height:4.5px;background:#5cd5f8;"></div><div class="r" style="left:80.5px;top:1918px;width:6.5px;height:4.5px;background:#d597f3;"></div><div class="r" style="left:89.5px;top:1918px;width:6.0px;height:4.5px;background:#3ec46d;"></div><div class="r" style="left:97.9px;top:1918px;width:19.1px;height:4.5px;background:#5394f5;"></div><div class="r" style="left:119.3px;top:1918px;width:9.0px;height:4.5px;background:#5394f5;"></div><div class="r" style="left:250px;top:1924.5px;width:71.6px;height:4.5px;background:#3ec46d;"></div><div class="r" style="left:617px;top:1924.5px;width:20px;height:4.5px;background:#5394f5;"></div><div class="r" style="left:730px;top:1924.5px;width:31px;height:4.5px;background:#3ec46d;"></div><div class="r" style="left:763px;top:1924.5px;width:20px;height:4.5px;background:#5394f5;"></div><div class="r" style="left:785px;top:1924.5px;width:87px;height:4.5px;background:#3ec46d;"></div><div class="r" style="left:874px;top:1924.5px;width:20.5px;height:4.5px;background:#5394f5;"></div><div class="r" style="left:730px;top:1931px;width:7px;height:4.5px;background:#5cd5f8;"></div><div class="r" style="left:738.5px;top:1931px;width:6.5px;height:4.5px;background:#d597f3;"></div><div class="r" style="left:747px;top:1931px;width:7px;height:4.5px;background:#3ec46d;"></div><div class="r" style="left:756px;top:1931px;width:20px;height:4.5px;background:#5394f5;"></div><div class="r" style="left:766.5px;top:1938px;width:3.5px;height:4.5px;background:#3ec46d;"></div><div class="r" style="left:772px;top:1938px;width:9px;height:4.5px;background:#5394f5;"></div><div class="r" style="left:783px;top:1938px;width:20px;height:4.5px;background:#5394f5;"></div><div class="r" style="left:730px;top:1944.5px;width:30px;height:4.5px;background:#f5f5f5;"></div><div class="r" style="left:762.6px;top:1944.5px;width:12.4px;height:4.5px;background:#3ec46d;"></div><div class="r" style="left:777px;top:1944.5px;width:20.5px;height:4.5px;background:#5394f5;"></div><div class="r" style="left:1003.7px;top:1951px;width:7.3px;height:4.5px;background:#5cd5f8;"></div><div class="r" style="left:1013px;top:1951px;width:9px;height:4.5px;background:#d597f3;"></div><div class="r" style="left:1024px;top:1951px;width:6px;height:4.5px;background:#3ec46d;"></div><div class="r" style="left:1032px;top:1951px;width:20px;height:4.5px;background:#5394f5;"></div><div class="r" style="left:1054px;top:1951px;width:13.6px;height:4.5px;background:#5394f5;"></div><div class="r" style="left:1428px;top:1957.5px;width:7.5px;height:4.5px;background:#5cd5f8;"></div><div class="r" style="left:1437px;top:1957.5px;width:9px;height:4.5px;background:#d597f3;"></div><div class="r" style="left:1448px;top:1957.5px;width:9px;height:4.5px;background:#3ec46d;"></div><div class="r" style="left:1459px;top:1957.5px;width:20.6px;height:4.5px;background:#5394f5;"></div><div class="r" style="left:1913px;top:1904.5px;width:20px;height:4.5px;background:#5394f5;"></div><div class="r" style="left:2167.6px;top:1911.5px;width:3.0px;height:4.5px;background:#3ec46d;"></div><div class="r" style="left:2172.4px;top:1911.5px;width:29.6px;height:4.5px;background:#5394f5;"></div><div class="r" style="left:2204px;top:1911.5px;width:3px;height:4.5px;background:#5394f5;"></div><div class="r" style="left:2210px;top:1911.5px;width:34px;height:4.5px;background:#5394f5;"></div><div class="r" style="left:2246px;top:1911.5px;width:128px;height:4.5px;background:#5394f5;"></div><div class="r" style="left:2378.6px;top:1911.5px;width:20.8px;height:4.5px;background:#5394f5;"></div><div class="r" style="left:2205px;top:1918px;width:20px;height:4.5px;background:#5394f5;"></div><div class="r" style="left:2203.7px;top:1924.5px;width:3.0px;height:4.5px;background:#3ec46d;"></div><div class="r" style="left:2208.8px;top:1924.5px;width:20.2px;height:4.5px;background:#5394f5;"></div><div class="r" style="left:2379.5px;top:1931px;width:20.5px;height:4.5px;background:#5394f5;"></div><div class="r" style="left:2377.7px;top:1938px;width:20.3px;height:4.5px;background:#5394f5;"></div><div class="r" style="left:320.7px;top:1913px;width:296.3px;height:22.5px;background:#0b4a73;"></div><div class="r" style="left:325px;top:1917.6px;width:286px;height:11.4px;background:#3ec46d;"></div><div class="r" style="left:1668px;top:1963px;width:380px;height:1px;background:#23364a;"></div></div>
<!--MAIN-->

</body></html>
